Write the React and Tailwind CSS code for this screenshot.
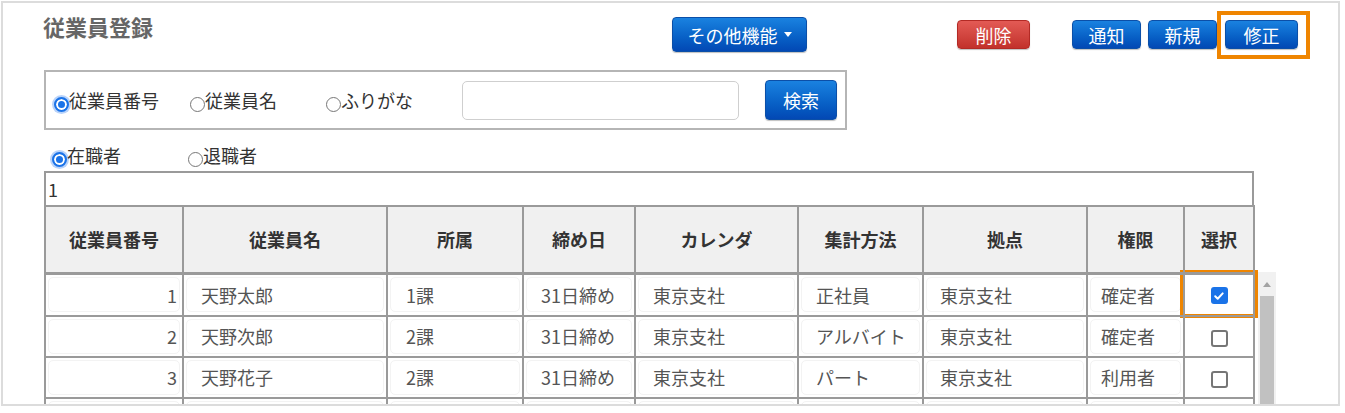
import React from "react";

const font = { fontFamily: '"Noto Sans CJK JP", "Noto Sans", sans-serif' };

const blueBtn =
  "flex items-center justify-center rounded-[4px] border border-[#0b4fa8] bg-gradient-to-b from-[#1a82e0] to-[#0348b4] text-white text-[18px] leading-none shadow-[0_1px_1px_rgba(0,0,0,0.25)]";

const Radio = ({ checked }) => (
  <span
    className={
      "mt-[8px] inline-block h-[15px] w-[15px] shrink-0 rounded-full " +
      (checked
        ? "border-[2px] border-[#1a73e8] bg-[#1a73e8] shadow-[inset_0_0_0_2px_white,0_0_0_2px_#b9d3fa]"
        : "border border-[#777] bg-white")
    }
  />
);

const RadioItem = ({ checked, label, className }) => (
  <label className={"flex items-center text-[18px] leading-none text-[#333] " + (className || "")}>
    <Radio checked={checked} />
    <span>{label}</span>
  </label>
);

const rows = [
  { no: 1, name: "天野太郎", dept: "1課", close: "31日締め", cal: "東京支社", method: "正社員", base: "東京支社", role: "確定者", sel: true },
  { no: 2, name: "天野次郎", dept: "2課", close: "31日締め", cal: "東京支社", method: "アルバイト", base: "東京支社", role: "確定者", sel: false },
  { no: 3, name: "天野花子", dept: "2課", close: "31日締め", cal: "東京支社", method: "パート", base: "東京支社", role: "利用者", sel: false },
  { no: "", name: "", dept: "", close: "", cal: "", method: "", base: "", role: "", sel: null },
];

const headers = ["従業員番号", "従業員名", "所属", "締め日", "カレンダ", "集計方法", "拠点", "権限", "選択"];
const widths = ["w-[138px]", "w-[204px]", "w-[136px]", "w-[112px]", "w-[163px]", "w-[125px]", "w-[164px]", "w-[97px]", "w-[70px]"];

const Cell = ({ children, right, pad = "pl-[12px]" }) => (
  <td className="h-[41px] border-2 border-[#9a9a9a] p-[2px] align-middle">
    <div
      className={
        "flex h-[35px] items-center rounded-[5px] border border-[#f3f3f3] text-[18px] leading-none text-[#555] " +
        (right ? "justify-end pr-[2px]" : pad)
      }
    >
      {children}
    </div>
  </td>
);

export default function App() {
  return (
    <div style={font} className="bg-white">
      <div className="ml-[1px] mt-[1px] h-[405px] w-[1339px] overflow-hidden border-2 border-[#dcdcdc] bg-white">
        {/* top bar */}
        <div className="flex h-[62px] items-start">
          <h1 className="ml-[40px] mt-[8px] w-[629px] text-[22px] font-bold leading-[30px] text-[#666]">
            従業員登録
          </h1>
          <button className={blueBtn + " mt-[14px] h-[35px] w-[135px] gap-[6px]"}>
            その他機能
            <span className="inline-block h-0 w-0 border-x-[4px] border-t-[5px] border-x-transparent border-t-white" />
          </button>
          <button className="ml-[150px] mt-[17px] flex h-[29px] w-[73px] items-center justify-center rounded-[4px] border border-[#b32a25] bg-gradient-to-b from-[#e35a55] to-[#c2312b] text-[18px] leading-none text-white shadow-[0_1px_1px_rgba(0,0,0,0.25)]">
            削除
          </button>
          <button className={blueBtn + " ml-[42px] mt-[17px] h-[29px] w-[69px]"}>通知</button>
          <button className={blueBtn + " ml-[7px] mt-[17px] h-[29px] w-[69px]"}>新規</button>
          <div className="ml-0 mt-[8px] h-[48px] w-[93px] border-[4px] border-[#ef8500] pl-[4px] pt-[5px]">
            <button className={blueBtn + " h-[29px] w-[73px]"}>修正</button>
          </div>
        </div>

        {/* search box */}
        <div className="ml-[41px] mt-[5px] flex h-[60px] w-[803px] items-center border-2 border-[#b5b5b5]">
          <RadioItem checked label="従業員番号" className="ml-[8px] w-[136px]" />
          <RadioItem label="従業員名" className="w-[136px]" />
          <RadioItem label="ふりがな" className="w-[136px]" />
          <input className="h-[39px] w-[277px] rounded-[5px] border border-[#cfcfcf] outline-none" />
          <button className={blueBtn + " ml-[26px] h-[40px] w-[72px]"}>検索</button>
        </div>

        {/* status radios */}
        <div className="ml-[49px] mt-[9px] flex h-[32px] items-center">
          <RadioItem checked label="在職者" className="w-[136px]" />
          <RadioItem label="退職者" />
        </div>

        {/* table area */}
        <div className="ml-[41px] flex items-start">
          <div className="w-[1210px]">
            <div className="flex h-[34px] items-center border-2 border-b-0 border-[#9a9a9a] pl-[2px] text-[18px] leading-none text-[#333]">
              1
            </div>
            <table className="w-[1210px] table-fixed border-collapse">
              <colgroup>
                {widths.map((w, i) => (
                  <col key={i} className={w} />
                ))}
              </colgroup>
              <thead>
                <tr>
                  {headers.map((h) => (
                    <th
                      key={h}
                      className="h-[67px] border-2 border-b-[3px] border-[#9a9a9a] bg-[#f0f0f0] text-center text-[18px] font-bold leading-none text-[#333]"
                    >
                      {h}
                    </th>
                  ))}
                </tr>
              </thead>
              <tbody>
                {rows.map((r, i) => (
                  <tr key={i}>
                    <Cell right>{r.no}</Cell>
                    <Cell pad="pl-[14px]">{r.name}</Cell>
                    <Cell pad="pl-[15px]">{r.dept}</Cell>
                    <Cell pad="pl-[14px]">{r.close}</Cell>
                    <Cell pad="pl-[14px]">{r.cal}</Cell>
                    <Cell pad="pl-[14px]">{r.method}</Cell>
                    <Cell pad="pl-[13px]">{r.base}</Cell>
                    <Cell pad="pl-[10px]">{r.role}</Cell>
                    {r.sel === true ? (
                      <td className="h-[41px] border-2 border-[#9a9a9a] p-0">
                        <div className="-mx-[5px] -mt-[5px] -mb-[3px] flex h-[48px] items-center justify-center border-[4px] border-[#ef8500] bg-white">
                          <span className="mt-[4px] flex h-[17px] w-[17px] items-center justify-center rounded-[3px] bg-[#1a73e8]">
                            <svg width="12" height="12" viewBox="0 0 12 12">
                              <path d="M2.2 6.3l2.5 2.5 5-5.4" fill="none" stroke="white" strokeWidth="2" strokeLinecap="round" strokeLinejoin="round" />
                            </svg>
                          </span>
                        </div>
                      </td>
                    ) : (
                      <td className="h-[41px] border-2 border-[#9a9a9a] p-0">
                        {r.sel === false && (
                          <div className="flex items-center justify-center">
                            <span className="mt-[4px] inline-block h-[17px] w-[17px] rounded-[3px] border-2 border-[#767676] bg-white" />
                          </div>
                        )}
                      </td>
                    )}
                  </tr>
                ))}
              </tbody>
            </table>
          </div>
          {/* scrollbar */}
          <div className="ml-[4px] mt-[101px] flex h-[140px] w-[18px] flex-col bg-[#f1f1f1]">
            <div className="flex h-[24px] items-center justify-center">
              <span className="inline-block h-0 w-0 border-x-[4px] border-b-[5px] border-x-transparent border-b-[#a3a3a3]" />
            </div>
            <div className="mx-[2px] flex-1 bg-[#c1c1c1]" />
          </div>
        </div>
      </div>
    </div>
  );
}
